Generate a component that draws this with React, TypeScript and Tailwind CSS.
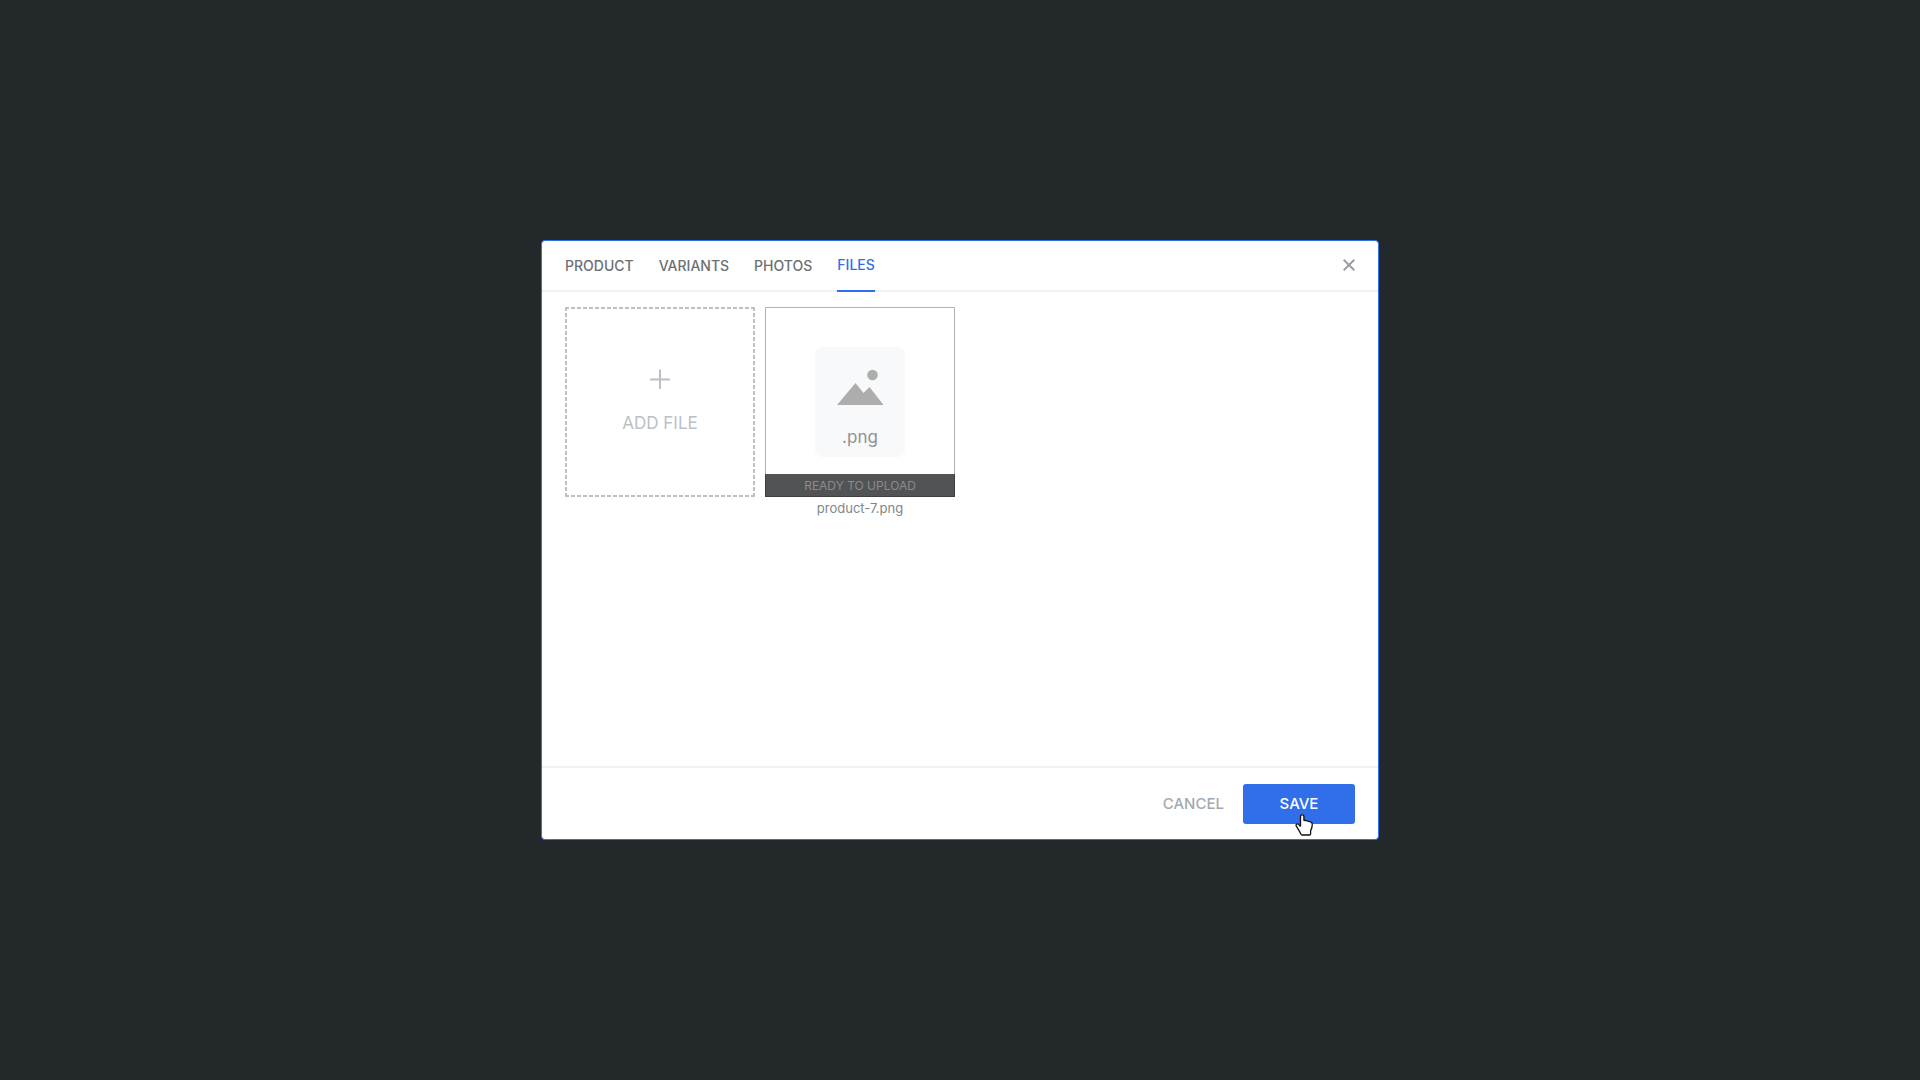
import type { ReactNode } from "react";

function Tab({ children, active = false }: { children: ReactNode; active?: boolean }) {
  return (
    <button
      type="button"
      role="tab"
      aria-selected={active}
      className={
        active
          ? "-mb-0.5 border-b-2 border-[#316fea] pb-0.5 text-[#316fea]"
          : "-mb-0.5 border-b-2 border-transparent text-[#6b7075]"
      }
    >
      {children}
    </button>
  );
}

function HandCursor() {
  return (
    <svg
      aria-hidden="true"
      viewBox="0 0 18 22"
      className="pointer-events-none absolute top-[30px] left-[52px] h-[22px] w-[18px]"
    >
      <path
        d="M5.5 12.5V2.2C5.5 .3 8.9 .3 8.9 2.2V6.3L11 6.5L13 7.2L15.5 7.8C16.8 8.2 17.3 8.9 17.3 10.2C17.3 13.2 16.7 14.5 15.6 17V20C15.4 20.8 15.1 21 14.5 21H7.2C6.4 21 6.1 20.6 5.7 19.8L4.5 17.4L1.5 12.4C.2 10.5 2.2 9.1 3.7 10.3L5.5 12.5"
        fill="#fff"
        stroke="#111"
        strokeWidth="1.3"
        strokeLinejoin="round"
      />
    </svg>
  );
}

export default function App() {
  return (
    <div className="flex min-h-screen items-center justify-center bg-[#23282b] font-['Inter',sans-serif]">
      <section
        role="dialog"
        aria-label="Edit product files"
        className="flex min-h-[600px] w-full max-w-[838px] flex-col rounded-[4px] border border-[#316fea] bg-white"
      >
        <header className="flex h-[51px] shrink-0 items-stretch justify-between border-b-2 border-[#f1f1f1] px-[23px]">
          <div role="tablist" className="flex gap-[25px] text-sm font-medium">
            <Tab>PRODUCT</Tab>
            <Tab>VARIANTS</Tab>
            <Tab>PHOTOS</Tab>
            <Tab active>FILES</Tab>
          </div>
          <button type="button" aria-label="Close" className="flex items-center pb-0.5 text-[#9a9ea5]">
            <svg viewBox="0 0 12 12" className="h-3 w-3" fill="none" stroke="currentColor" strokeWidth="2">
              <path d="M.7 .7L11.3 11.3M11.3 .7L.7 11.3" />
            </svg>
          </button>
        </header>

        <div role="tabpanel" className="flex grow items-start gap-2.5 px-[23px] py-[15px]">
          <button type="button" className="relative flex h-[190px] w-[190px] flex-col items-center pt-[62px] text-[#bbc0c7]">
            <svg aria-hidden="true" viewBox="0 0 190 190" className="absolute inset-0 h-full w-full" fill="none" stroke="currentColor" strokeWidth="2">
              <path d="M0 1H190M0 189H190M1 0V190M189 0V190" strokeDasharray="4 2" />
            </svg>
            <svg aria-hidden="true" viewBox="0 0 20 20" className="h-5 w-5" fill="none" stroke="currentColor" strokeWidth="2">
              <path d="M0 10.5H20M10 .5V20.5" />
            </svg>
            <span className="mt-[22px] text-[17px] leading-6">ADD FILE</span>
          </button>

          <figure className="w-[190px]">
            <div className="flex h-[190px] flex-col">
              <div className="flex h-[167px] w-full justify-center border border-b-0 border-[#b2b3b4] pt-[39px]">
                <div className="flex h-[110px] w-[90px] flex-col items-center rounded-[8px] bg-[#f8f9fb] pt-[22px]">
                  <svg aria-hidden="true" viewBox="0 0 47 36" className="h-9 w-[47px]" fill="#adadad">
                    <circle cx="35.5" cy="6" r="5.3" />
                    <path d="M0 36L18.5 14L26.5 24L32.5 18L46.5 36Z" />
                  </svg>
                  <span className="mt-5 text-[17px] leading-6 text-[#919191]">.png</span>
                </div>
              </div>
              <div className="flex h-[23px] w-full items-center justify-center border border-t-0 border-[#3e3f40] bg-[#525355] pt-0.5 text-xs text-[#8b8c8d]">
                READY TO UPLOAD
              </div>
            </div>
            <figcaption className="mt-px text-center text-[13px] leading-5 text-[#7f868c]">product-7.png</figcaption>
          </figure>
        </div>

        <footer className="flex items-center justify-end gap-[19px] border-t-2 border-[#f1f1f1] px-[23px] pt-4 pb-[15px] text-[15px] font-medium">
          <button type="button" className="text-[#a5a9af]">CANCEL</button>
          <div className="relative">
            <button type="button" className="h-10 w-28 rounded-[3px] bg-[#316fea] text-white">SAVE</button>
            <HandCursor />
          </div>
        </footer>
      </section>
    </div>
  );
}
